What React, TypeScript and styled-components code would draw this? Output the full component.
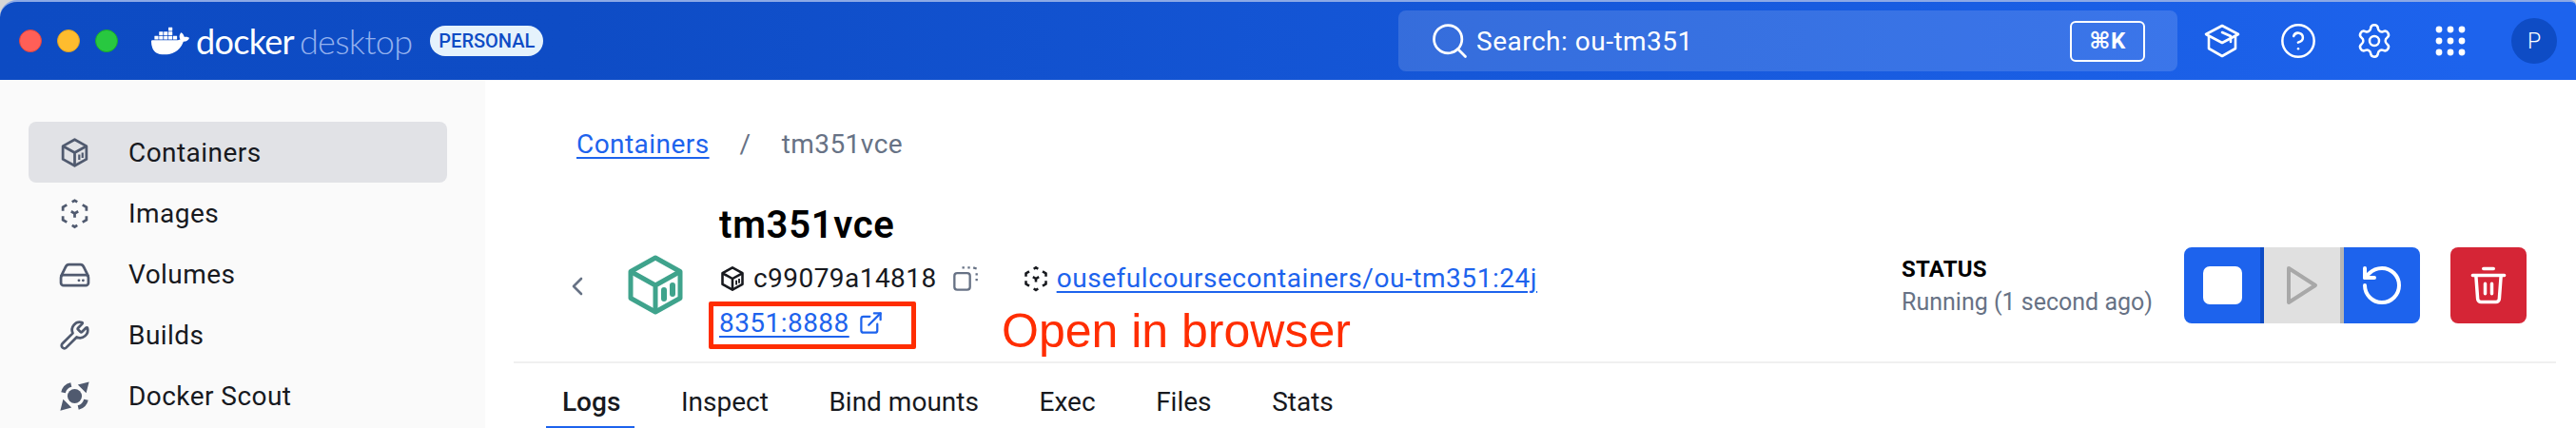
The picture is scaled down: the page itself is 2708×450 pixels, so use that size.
import { FC } from "react";
import styled, { createGlobalStyle } from "styled-components";
import { CircleHelp, ExternalLink, RotateCcw, Search, Settings, Wrench } from "lucide-react";
import { SiDocker } from "react-icons/si";

const GlobalStyle = createGlobalStyle`
  html, body {
    margin: 0;
    padding: 0;
    background: #d6d6d6;
    font-family: Roboto, "Liberation Sans", sans-serif;
    overflow: hidden;
  }
`;

const Page = styled.div`
  width: 2708px;
  height: 450px;
  overflow: hidden;
  display: flex;
  flex-direction: column;
`;

/* ---------- title bar ---------- */

const TitleBar = styled.header`
  height: 84px;
  box-sizing: border-box;
  flex: none;
  display: flex;
  align-items: center;
  padding: 0 20px;
  border-top: 2px solid #8ca9e6;
  border-radius: 18px 6px 0 0;
  background: linear-gradient(90deg, #0d4bc3 0%, #0e4cc5 22%, #1d63ed 96%);
  color: #fff;
`;

const Lights = styled.div`
  display: flex;
  gap: 16px;
  margin-right: 35px;
`;

const Light = styled.span<{ $color: string; $edge: string }>`
  width: 24px;
  height: 24px;
  box-sizing: border-box;
  border-radius: 50%;
  background: ${(p) => p.$color};
  border: 1px solid ${(p) => p.$edge};
`;

const Brand = styled.div`
  display: flex;
  align-items: center;
  font-family: Lato, sans-serif;
  font-size: 36px;
  line-height: 48px;
  letter-spacing: -0.7px;
`;

const BrandStrong = styled.span`
  margin-left: 7px;
  font-weight: 400;
  color: #fff;
`;

const BrandLight = styled.span`
  margin-left: 6px;
  font-weight: 300;
  color: #94b1ee;
`;

const Badge = styled.span`
  margin-left: 19px;
  height: 32px;
  padding: 0 9px;
  display: flex;
  align-items: center;
  border-radius: 16px;
  background: #e5f2fc;
  color: #0e4cc5;
  font-size: 20px;
  font-weight: 500;
`;

const SearchBox = styled.div`
  margin-left: auto;
  margin-right: 7px;
  width: 819px;
  height: 64px;
  box-sizing: border-box;
  padding: 0 34px 0 32px;
  display: flex;
  align-items: center;
  gap: 6px;
  border-radius: 8px;
  background: rgba(255, 255, 255, 0.14);
  font-size: 28px;
  letter-spacing: 0.5px;
`;

const SearchText = styled.span`
  flex: 1;
`;

const KeyHint = styled.span`
  width: 79px;
  height: 43px;
  box-sizing: border-box;
  display: flex;
  align-items: center;
  justify-content: center;
  border: 2px solid #fff;
  border-radius: 6px;
  font-size: 24px;
  font-weight: 700;
  font-family: Roboto, "DejaVu Sans", sans-serif;
`;

const ToolSlot = styled.div`
  width: 80px;
  height: 48px;
  display: flex;
  align-items: center;
  justify-content: center;
`;

const Avatar = styled.span`
  margin-left: 24px;
  width: 48px;
  height: 48px;
  display: flex;
  align-items: center;
  justify-content: center;
  border-radius: 50%;
  background: #0e4cc5;
  font-size: 23px;
  font-weight: 300;
`;

/* ---------- sidebar ---------- */

const Body = styled.div`
  flex: 1;
  min-height: 0;
  display: flex;
  background: #fff;
`;

const Sidebar = styled.nav`
  width: 510px;
  flex: none;
  box-sizing: border-box;
  padding: 44px 40px 0 30px;
  background: #fafafa;
`;

const NavItem = styled.div<{ $active?: boolean }>`
  height: 64px;
  display: flex;
  align-items: center;
  padding-left: 32px;
  gap: 40px;
  border-radius: 8px;
  background: ${(p) => (p.$active ? "#e1e2e6" : "transparent")};
  color: #17191e;
  font-size: 28px;
  letter-spacing: 0.45px;
  svg {
    width: 33px;
    height: 33px;
    flex: none;
    color: #505a6f;
  }
`;

/* ---------- content ---------- */

const Content = styled.main`
  flex: 1;
  min-width: 0;
  margin: 0 21px 0 30px;
  display: flex;
  flex-direction: column;
`;

const Breadcrumbs = styled.div`
  height: 36px;
  margin-top: 50px;
  padding-left: 66px;
  display: flex;
  align-items: center;
  font-size: 28px;
  letter-spacing: 0.45px;
  color: #677285;
`;

const TextLink = styled.a`
  color: #1d63ed;
  text-decoration: underline;
  text-decoration-thickness: 2px;
  text-underline-offset: 4px;
`;

const ImageLink = styled(TextLink)`
  letter-spacing: 0.55px;
`;

const Slash = styled.span`
  margin: 0 32px;
`;

const Title = styled.h1`
  margin: 43px 0 0 216px;
  height: 47px;
  font-size: 40px;
  line-height: 47px;
  font-weight: 600;
  letter-spacing: 0.7px;
  color: #000;
`;

const Summary = styled.section`
  height: 121px;
  padding-right: 31px;
  display: flex;
  align-items: flex-start;
  border-bottom: 2px solid #f0f0f0;
`;

const BackIcon = styled.svg`
  width: 14px;
  height: 20px;
  margin: 31px 46px 0 60px;
  flex: none;
`;

const ContainerMark = styled.svg`
  width: 58px;
  height: 63px;
  margin: 8px 38px 0 0;
  flex: none;
`;

const Meta = styled.div`
  padding-top: 15px;
  display: flex;
  flex-direction: column;
  gap: 11px;
`;

const MetaRow = styled.div`
  position: relative;
  height: 36px;
  display: flex;
  align-items: center;
  font-size: 28px;
  letter-spacing: 0.45px;
  color: #17191e;
`;

const SmallIcon = styled.svg<{ $gap: number; $before?: number }>`
  width: 28px;
  height: 28px;
  flex: none;
  margin-left: ${(p) => p.$before ?? 0}px;
  margin-right: ${(p) => p.$gap}px;
`;

const PortLink = styled(TextLink)`
  margin-right: 9px;
`;

const Highlight = styled.span`
  position: absolute;
  left: -11px;
  top: -5px;
  width: 218px;
  height: 50px;
  box-sizing: border-box;
  border: 5px solid #ff2d00;
  border-radius: 2px;
`;

const Annotation = styled.span`
  position: absolute;
  left: 297px;
  top: -2px;
  white-space: nowrap;
  font-family: "Liberation Sans", Arial, sans-serif;
  font-size: 50px;
  line-height: 56px;
  letter-spacing: 0;
  color: #ff2d00;
`;

const Status = styled.div`
  margin-left: auto;
  height: 80px;
  padding-top: 4px;
  box-sizing: border-box;
  display: flex;
  flex-direction: column;
  justify-content: center;
  gap: 5px;
`;

const StatusLabel = styled.span`
  font-size: 24px;
  line-height: 28px;
  font-weight: 700;
  letter-spacing: 0.2px;
  color: #000;
`;

const StatusValue = styled.span`
  font-size: 25px;
  line-height: 32px;
  color: #677285;
`;

const Actions = styled.div`
  margin-left: 33px;
  display: flex;
  gap: 32px;
`;

const ButtonGroup = styled.div`
  display: flex;
  border-radius: 8px;
  overflow: hidden;
`;

const ActionButton = styled.button<{ $bg: string; $edge?: string; $width: number }>`
  width: ${(p) => p.$width}px;
  height: 80px;
  box-sizing: border-box;
  padding: 0;
  display: flex;
  align-items: center;
  justify-content: center;
  border: 0;
  border-right: ${(p) => (p.$edge ? `4px solid ${p.$edge}` : "0")};
  background: ${(p) => p.$bg};
  color: #fff;
`;

const DeleteButton = styled(ActionButton)`
  border-radius: 8px;
`;

const Tabs = styled.div`
  height: 68px;
  display: flex;
  padding-left: 34px;
`;

const Tab = styled.div<{ $active?: boolean }>`
  box-sizing: border-box;
  height: 68px;
  padding: 14px 15px 0 17px;
  margin-right: 31.6px;
  display: flex;
  align-items: center;
  border-bottom: 2px solid ${(p) => (p.$active ? "#1d63ed" : "transparent")};
  font-size: 28px;
  font-weight: ${(p) => (p.$active ? 500 : 400)};
  color: #17191e;
`;

/* ---------- drawn icons ---------- */

const BoxIcon: FC = () => (
  <svg viewBox="0 0 24 24" fill="none" stroke="currentColor" strokeWidth="2" strokeLinejoin="round">
    <path d="M12 2l9 5v10l-9 5-9-5V7z" />
    <path d="M3.5 7.3L12 12l8.5-4.7M12 12v9.5" />
    <path d="M15.5 13.500v4M18 12v4" strokeWidth="1.6" />
  </svg>
);

const ImagePaths: FC = () => (
  <>
    <path d="M10 3.2L12 2l2 1.2M6 5.4L3 7.2V10M18 5.4l3 1.8V10M3 14v2.8l3 1.8M21 14v2.8l-3 1.8" />
    <path d="M10 21l2 1.2 2-1.2" />
    <path d="M9.3 10.4L12 12l2.7-1.6M12 12v3" />
  </>
);

const VolumeIcon: FC = () => (
  <svg viewBox="0 0 24 24" fill="none" stroke="currentColor" strokeWidth="2" strokeLinejoin="round">
    <path d="M1.5 13.5L5 6.5A3 3 0 0 1 7.6 4.5h8.8A3 3 0 0 1 19 6.5l3.5 7" />
    <rect x="1.5" y="12.5" width="21" height="8" rx="2" />
    <path d="M15.2 16.6h.1M18.4 16.6h.1" strokeLinecap="round" strokeWidth="2" />
  </svg>
);

const ScoutIcon: FC = () => (
  <svg viewBox="0 0 24 24" fill="currentColor" stroke="none">
    <circle cx="12" cy="12" r="5.5" />
    <path d="M23 1l-2.2 8.6-6.4-6.4zM1 23l2.2-8.6 6.4 6.4z" />
    <path d="M3.3 9.3A8 8 0 0 1 9.3 3.3M20.7 14.7a8 8 0 0 1-6 6" fill="none" stroke="currentColor" strokeWidth="3.4" />
  </svg>
);

const LearnIcon: FC = () => (
  <svg width="38" height="36" viewBox="0 0 38 36" fill="none" stroke="#fff" strokeWidth="2.6" strokeLinejoin="round" strokeLinecap="round">
    <path d="M19 2L2 11l17 9 17-9z" />
    <path d="M5 13v13l14 8 14-8V13" />
    <path d="M19 9l9 4v6" />
  </svg>
);

const DotsIcon: FC = () => (
  <svg width="32" height="32" viewBox="0 0 32 32" fill="#fff">
    {[4, 16, 28].map((y) =>
      [4, 16, 28].map((x) => <circle key={`${x}-${y}`} cx={x} cy={y} r="3.4" />)
    )}
  </svg>
);

const navItems = [
  { label: "Containers", icon: <BoxIcon />, active: true },
  {
    label: "Images",
    icon: (
      <svg viewBox="0 0 24 24" fill="none" stroke="currentColor" strokeWidth="2">
        <ImagePaths />
      </svg>
    ),
  },
  { label: "Volumes", icon: <VolumeIcon /> },
  { label: "Builds", icon: <Wrench strokeWidth={2} /> },
  { label: "Docker Scout", icon: <ScoutIcon /> },
];

const tabs = ["Logs", "Inspect", "Bind mounts", "Exec", "Files", "Stats"];

function App() {
  return (
    <Page>
      <GlobalStyle />
      <TitleBar>
        <Lights>
          <Light $color="#ff5f57" $edge="#e0443e" />
          <Light $color="#febc2e" $edge="#dea123" />
          <Light $color="#28c840" $edge="#1aab29" />
        </Lights>
        <SiDocker size={40} color="#fff" />
        <Brand>
          <BrandStrong>docker</BrandStrong>
          <BrandLight>desktop</BrandLight>
        </Brand>
        <Badge>PERSONAL</Badge>
        <SearchBox>
          <Search size={44} strokeWidth={1.5} />
          <SearchText>Search: ou-tm351</SearchText>
          <KeyHint>⌘K</KeyHint>
        </SearchBox>
        <ToolSlot>
          <LearnIcon />
        </ToolSlot>
        <ToolSlot>
          <CircleHelp size={40} strokeWidth={1.5} color="#fff" />
        </ToolSlot>
        <ToolSlot>
          <Settings size={40} strokeWidth={1.5} color="#fff" />
        </ToolSlot>
        <ToolSlot>
          <DotsIcon />
        </ToolSlot>
        <Avatar>P</Avatar>
      </TitleBar>
      <Body>
        <Sidebar>
          {navItems.map((item) => (
            <NavItem key={item.label} $active={item.active}>
              {item.icon}
              {item.label}
            </NavItem>
          ))}
        </Sidebar>
        <Content>
          <Breadcrumbs>
            <TextLink>Containers</TextLink>
            <Slash>/</Slash>
            tm351vce
          </Breadcrumbs>
          <Title>tm351vce</Title>
          <Summary>
            <BackIcon viewBox="0 0 14 20" fill="none" stroke="#677285" strokeWidth="2.6" strokeLinecap="round" strokeLinejoin="round">
              <path d="M11 2L3 10l8 8" />
            </BackIcon>
            <ContainerMark viewBox="0 0 58 63" fill="none" stroke="#3fa38c" strokeWidth="5" strokeLinejoin="round">
              <path d="M29 3l26 14.5v28L29 60 3 45.5v-28z" />
              <path d="M4 18l25 14 25-14M29 32v27" />
              <path d="M38 37v9M47 32v9" strokeWidth="6" strokeLinecap="round" />
            </ContainerMark>
            <Meta>
              <MetaRow>
                <SmallIcon $gap={8} viewBox="0 0 24 24" fill="none" stroke="#17191e" strokeWidth="2.2" strokeLinejoin="round">
                  <path d="M12 2l9 5v10l-9 5-9-5V7z" />
                  <path d="M3.5 7.3L12 12l8.5-4.7M12 12v9.5" />
                  <path d="M15.5 13.5v4M18 12v4" strokeWidth="1.6" />
                </SmallIcon>
                c99079a14818
                <SmallIcon $before={16} $gap={46} viewBox="0 0 24 24" fill="none" stroke="#677285" strokeWidth="2">
                  <rect x="2" y="7" width="14" height="15" rx="2.5" />
                  <path d="M9 2h2M14 2h2M19 2l3 1M22 7v2M22 12v2" />
                </SmallIcon>
                <SmallIcon $gap={8} viewBox="0 0 24 24" fill="none" stroke="#17191e" strokeWidth="2.2">
                  <ImagePaths />
                </SmallIcon>
                <ImageLink>ousefulcoursecontainers/ou-tm351:24j</ImageLink>
              </MetaRow>
              <MetaRow>
                <PortLink>8351:8888</PortLink>
                <ExternalLink size={27} strokeWidth={2} color="#1d63ed" />
                <Highlight />
                <Annotation>Open in browser</Annotation>
              </MetaRow>
            </Meta>
            <Status>
              <StatusLabel>STATUS</StatusLabel>
              <StatusValue>Running (1 second ago)</StatusValue>
            </Status>
            <Actions>
              <ButtonGroup>
                <ActionButton $bg="#1d63ed" $edge="#0e4cc5" $width={84}>
                  <svg width="41" height="40" viewBox="0 0 41 40">
                    <rect width="41" height="40" rx="7" fill="#fff" />
                  </svg>
                </ActionButton>
                <ActionButton $bg="#e0e0e0" $edge="#b5b5b5" $width={84}>
                  <svg width="34" height="42" viewBox="0 0 34 42" fill="none" stroke="#a8a8a8" strokeWidth="4" strokeLinejoin="round">
                    <path d="M3 3l28 18L3 39z" />
                  </svg>
                </ActionButton>
                <ActionButton $bg="#1d63ed" $width={80}>
                  <RotateCcw size={48} strokeWidth={2} />
                </ActionButton>
              </ButtonGroup>
              <DeleteButton $bg="#d52536" $width={80}>
                <svg width="42" height="42" viewBox="0 0 24 24" fill="none" stroke="#fff" strokeWidth="2" strokeLinecap="round">
                  <path d="M9 2h6M2.5 6h19" />
                  <path d="M4.5 6.5l1 13.5a2 2 0 0 0 2 2h9a2 2 0 0 0 2-2l1-13.5" />
                  <path d="M10 11v6M14 11v6" />
                </svg>
              </DeleteButton>
            </Actions>
          </Summary>
          <Tabs>
            {tabs.map((tab, i) => (
              <Tab key={tab} $active={i === 0}>
                {tab}
              </Tab>
            ))}
          </Tabs>
        </Content>
      </Body>
    </Page>
  );
}

export default App;
